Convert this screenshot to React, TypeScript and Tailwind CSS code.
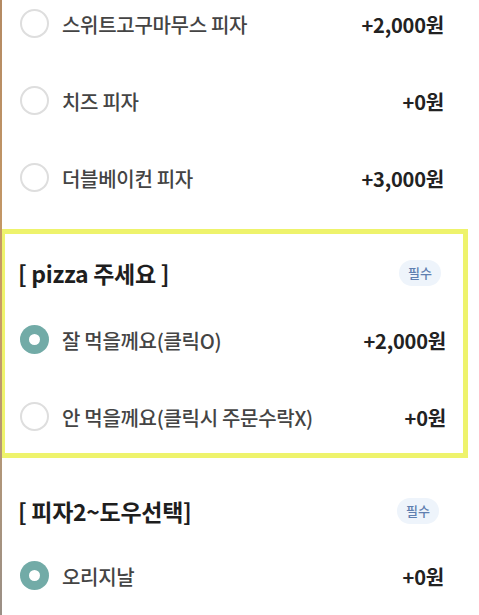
import React from "react";

const font = { fontFamily: '"Noto Sans CJK KR", "Noto Sans", sans-serif' };

function Radio({ checked }: { checked?: boolean }) {
  if (checked) {
    return (
      <div className="w-[29px] h-[29px] rounded-full bg-[#72aba7] flex items-center justify-center shrink-0">
        <div className="w-[11px] h-[11px] rounded-full bg-white" />
      </div>
    );
  }
  return <div className="w-[29px] h-[29px] rounded-full border-2 border-[#dedede] bg-white shrink-0" />;
}

function Option({
  label,
  price,
  checked,
  h = "h-[80px]",
  pl = "pl-[18px]",
  pr = "pr-[35px]",
}: {
  label: string;
  price: string;
  checked?: boolean;
  h?: string;
  pl?: string;
  pr?: string;
}) {
  return (
    <div className={`flex items-center ${h} ${pl} ${pr}`}>
      <Radio checked={checked} />
      <span className="ml-[13px] pt-[3px] text-[20px] font-medium text-[#444] tracking-[-0.3px]">{label}</span>
      <span className="ml-auto pt-[3px] text-[20px] font-bold text-[#222] tracking-[-0.2px]">{price}</span>
    </div>
  );
}

function Badge() {
  return (
    <div className="w-[42px] h-[26px] rounded-full bg-[#eef4fb] flex items-center justify-center text-[13px] font-medium text-[#5f7fb0]">
      필수
    </div>
  );
}

export default function App() {
  return (
    <div className="w-[479px] h-[615px] overflow-hidden bg-white flex" style={font}>
      <div className="w-[2px] h-full bg-gradient-to-b from-[#b48a63] via-[#c99c66] to-[#9a8f86] shrink-0" />
      <div className="flex-1 flex flex-col mt-[-15px]">
        <Option label="스위트고구마무스 피자" price="+2,000원" />
        <Option label="치즈 피자" price="+0원" />
        <Option label="더블베이컨 피자" price="+3,000원" />

        <div className="mt-[13px] mr-[11px] border-[5px] border-l-[3px] border-[#eef36c] flex flex-col">
          <div className="h-[65px] pt-[13px] flex items-center pl-[13px] pr-[22px]">
            <span className="text-[23px] font-bold text-[#1e1e1e] tracking-[-0.3px]">[ pizza 주세요 ]</span>
            <div className="ml-auto">
              <Badge />
            </div>
          </div>
          <Option label="잘 먹을께요(클릭O)" price="+2,000원" checked pl="pl-[15px]" pr="pr-[17px]" />
          <Option label="안 먹을께요(클릭시 주문수락X)" price="+0원" h="h-[74px]" pl="pl-[15px]" pr="pr-[17px]" />
        </div>

        <div className="mt-[41px] h-[24px] flex items-center pl-[16px] pr-[40px]">
          <span className="text-[23px] font-bold text-[#1e1e1e] tracking-[-0.3px]">[ 피자2~도우선택]</span>
          <div className="ml-auto">
            <Badge />
          </div>
        </div>
        <div className="mt-[12px]">
          <Option label="오리지날" price="+0원" checked />
        </div>
      </div>
    </div>
  );
}
